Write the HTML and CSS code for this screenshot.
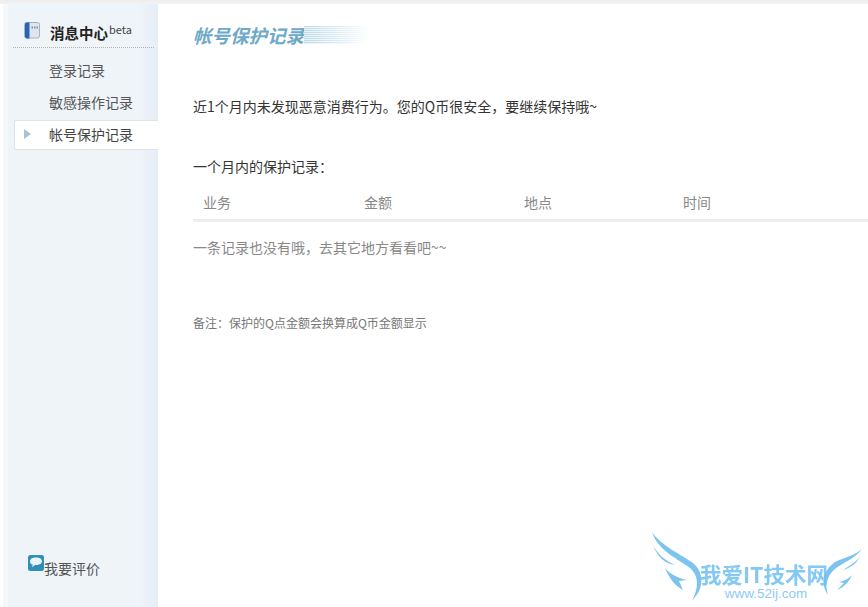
FILE: index.html
```html
<!DOCTYPE html>
<html lang="zh-CN">
<head>
  <meta charset="UTF-8" />
  <title>帐号保护记录</title>
  <link rel="stylesheet" href="styles.css">
</head>
<body>
  <div class="page">
    <aside class="sidebar">
      <div class="side-head">
        <svg class="book-icon" viewBox="0 0 16 17" aria-hidden="true">
          <rect x="0.5" y="0.5" width="15" height="15.5" rx="2" fill="#dfe5ec" stroke="#a4b2c2"/>
          <path d="M1 2.500a2 2 0 0 1 2-2h2.500v16H3a2 2 0 0 1-2-2z" fill="#2b62b4"/>
          <path d="M7.500 4.500h1.500v2H7.500zM10 4.500h1.500v2H10zM12.500 4.500h1.500v2h-1.500z" fill="#8494a8"/>
        </svg>
        <span class="side-title">消息中心</span><sup class="beta">beta</sup>
      </div>
      <nav class="side-nav">
        <a class="nav-item">登录记录</a>
        <a class="nav-item">敏感操作记录</a>
        <a class="nav-item active">帐号保护记录</a>
      </nav>
      <div class="rate">
        <svg class="chat-icon" viewBox="0 0 16 16" aria-hidden="true">
          <rect width="16" height="16" rx="2.500" fill="#2f8fb5"/>
          <path d="M8 2.500c3.600 0 6 1.500 6 3.700s-2.400 3.700-6 3.700l-1 0-3 2.300 .8-2.800C3 9.600 2 8 2 6.200 2 4 4.400 2.500 8 2.500z" fill="#e8f6fb"/>
        </svg>
        <span>我要评价</span>
      </div>
    </aside>

    <main class="content">
      <div class="title-bar">
        <h1>帐号保护记录</h1>
        <div class="title-lines"></div>
      </div>
      <p class="status">近1个月内未发现恶意消费行为。您的Q币很安全，要继续保持哦~</p>
      <h2 class="sub">一个月内的保护记录：</h2>
      <div class="table-head">
        <span>业务</span>
        <span>金额</span>
        <span>地点</span>
        <span>时间</span>
      </div>
      <p class="empty">一条记录也没有哦，去其它地方看看吧~~</p>
      <p class="note">备注：保护的Q点金额会换算成Q币金额显示</p>
    </main>
  </div>

  <!-- watermark -->
  <div class="watermark">
    <svg class="wings" viewBox="0 0 216 76" aria-hidden="true">
      <path d="M0 1C8 14 30 24 41 32C50 39 52 52 46 62L40 70C46 58 48 46 38 37C28 29 6 20 0 1z"/>
      <path d="M1 14C5 23 14 30 23 34C14 33 5 26 1 14z"/>
      <path d="M13 37C18 43 26 47 35 49L27 50L31 59C23 55 17 47 13 37z"/>
      <path d="M210 17C205 26 195 30 187 35C176 42 172 52 176 64C168 52 171 40 183 31C193 26 205 24 210 17z"/>
      <path d="M208 26C204 33 198 37 191 39C197 35 204 31 208 26z"/>
      <path d="M200 44C196 48 192 50 187 51L192 52L185 59C192 56 197 51 200 44z"/>
    </svg>
    <div class="wm-name">我爱IT技术网</div>
    <div class="wm-url">www.52ij.com</div>
  </div>
</body>
</html>
```

FILE: styles.css
```css
* {
  box-sizing: border-box;
  margin: 0;
  padding: 0;
}
html, body {
  height: 100%;
}
body {
  background: #fff;
  color: #333;
  font-family: "Noto Sans CJK SC", "Liberation Sans", sans-serif;
  font-size: 14px;
  overflow: hidden;
  position: relative;
}
.page {
  display: flex;
  height: 100%;
  padding: 4px 0 0 3px;
  background: linear-gradient(#eeeeee 0, #f2f2f2 4px, #fff 4px);
}

/* Left column */
.sidebar {
  width: 155px;
  flex-shrink: 0;
  display: flex;
  flex-direction: column;
  padding: 0 0 29px 5px;
  border-left: 5px solid #f5f8fb;
  background: linear-gradient(90deg, #eff4f9 0, #eff4f9 130px, #e6edf5 100%);
}
.side-head {
  display: flex;
  align-items: flex-start;
  width: 141px;
  height: 44px;
  padding: 18px 0 0 11px;
  border-bottom: 1px dotted #aab2ba;
}
.book-icon {
  width: 16px;
  height: 17px;
  margin-right: 10px;
}
.side-title {
  font-size: 14.500px;
  font-weight: 700;
  line-height: 20px;
  margin-top: 1px;
  color: #222;
}
.beta {
  font-size: 11px;
  line-height: 14px;
  margin-left: 1px;
  color: #444;
}
.side-nav {
  display: flex;
  flex-direction: column;
  margin-top: 6px;
  flex: 1;
}
.nav-item {
  display: block;
  height: 32px;
  line-height: 32px;
  padding-left: 36px;
  font-size: 14px;
  color: #555;
}
.nav-item.active {
  position: relative;
  width: 144px;
  height: 30px;
  line-height: 26px;
  margin: 2px 0 0 1px;
  background: #fff;
  border: 1px solid #dde3e8;
  border-right: 0;
  border-radius: 2px 0 0 2px;
  padding-left: 34px;
  color: #444;
}
.nav-item.active::before {
  content: "";
  position: absolute;
  left: 9px;
  top: 8px;
  border-left: 7px solid #aac2d2;
  border-top: 5.500px solid transparent;
  border-bottom: 5.500px solid transparent;
}
.rate {
  display: flex;
  align-items: flex-start;
  padding-left: 15px;
  margin-top: -1px;
  font-size: 14px;
  color: #555;
}
.chat-icon {
  width: 16px;
  height: 16px;
  margin-top: -3px;
}
.rate span {
  line-height: 20px;
}

/* Main column */
.content {
  flex: 1;
  padding: 21px 0 0 35px;
  min-width: 0;
}
.title-bar {
  display: flex;
  align-items: center;
  height: 20px;
}
.title-bar h1 {
  font-size: 18.500px;
  font-weight: 700;
  font-style: italic;
  line-height: 20px;
  color: #6ea9c9;
  white-space: nowrap;
}
.title-lines {
  width: 66px;
  height: 18px;
  background: repeating-linear-gradient(#bcd9e8 0, #bcd9e8 1px, #eaf3f8 1px, #eaf3f8 2px);
  -webkit-mask-image: linear-gradient(90deg, #000, transparent);
  mask-image: linear-gradient(90deg, #000, transparent);
}
.status {
  margin-top: 51px;
  line-height: 20px;
  color: #333;
}
.sub {
  margin-top: 40px;
  font-size: 14px;
  font-weight: 400;
  line-height: 20px;
  color: #333;
}
.table-head {
  display: grid;
  grid-template-columns: 161px 160px 159px 1fr;
  height: 38px;
  margin-top: 8px;
  padding-left: 10px;
  align-items: center;
  border-bottom: 3px solid #eeeeee;
  font-size: 14px;
  color: #888;
}
.empty {
  margin-top: 15px;
  line-height: 20px;
  color: #888;
}
.note {
  margin-top: 57px;
  font-size: 12px;
  line-height: 18px;
  color: #777;
}

/* Watermark over the corner */
.watermark {
  position: absolute;
  left: 652px;
  top: 531px;
  width: 216px;
  height: 76px;
  color: #6fc0f2;
  text-align: center;
  pointer-events: none;
}
.wings {
  position: absolute;
  left: 0;
  top: 0;
  width: 216px;
  height: 76px;
  fill: #7cc4f0;
}
.wm-name {
  position: absolute;
  left: 48px;
  top: 31px;
  font-size: 21.500px;
  font-weight: 700;
  line-height: 23px;
  white-space: nowrap;
  opacity: .85;
}
.wm-url {
  position: absolute;
  left: 0;
  width: 228px;
  top: 56px;
  font-family: "Liberation Sans", sans-serif;
  font-size: 13.500px;
  line-height: 14px;
  color: #8ccbf3;
  text-align: center;
}
```
